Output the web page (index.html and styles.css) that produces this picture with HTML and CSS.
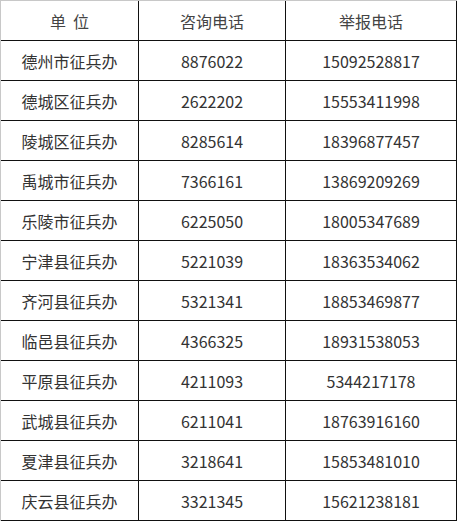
FILE: index.html
```html
<!DOCTYPE html>
<html lang="zh">
<head>
<meta charset="utf-8">
<link rel="stylesheet" href="styles.css">
</head>
<body>
<div class="table">
  <div class="cell head">单&nbsp;&nbsp;位</div><div class="cell head">咨询电话</div><div class="cell head">举报电话</div>
  <div class="cell">德州市征兵办</div><div class="cell">8876022</div><div class="cell">15092528817</div>
  <div class="cell">德城区征兵办</div><div class="cell">2622202</div><div class="cell">15553411998</div>
  <div class="cell">陵城区征兵办</div><div class="cell">8285614</div><div class="cell">18396877457</div>
  <div class="cell">禹城市征兵办</div><div class="cell">7366161</div><div class="cell">13869209269</div>
  <div class="cell">乐陵市征兵办</div><div class="cell">6225050</div><div class="cell">18005347689</div>
  <div class="cell">宁津县征兵办</div><div class="cell">5221039</div><div class="cell">18363534062</div>
  <div class="cell">齐河县征兵办</div><div class="cell">5321341</div><div class="cell">18853469877</div>
  <div class="cell">临邑县征兵办</div><div class="cell">4366325</div><div class="cell">18931538053</div>
  <div class="cell">平原县征兵办</div><div class="cell">4211093</div><div class="cell">5344217178</div>
  <div class="cell">武城县征兵办</div><div class="cell">6211041</div><div class="cell">18763916160</div>
  <div class="cell">夏津县征兵办</div><div class="cell">3218641</div><div class="cell">15853481010</div>
  <div class="cell">庆云县征兵办</div><div class="cell">3321345</div><div class="cell">15621238181</div>
</div>
</body>
</html>
```
FILE: styles.css
```css
html, body {
  margin: 0;
  padding: 0;
  background: #fff;
}
.table {
  display: grid;
  grid-template-columns: 138px 147px 171px;
  grid-auto-rows: 40px;
  width: 456px;
  border-left: 1px solid #c8c8c8;
  border-top: 1px solid #c8c8c8;
  font-family: "Noto Sans CJK SC", "Noto Sans", sans-serif;
  font-size: 16px;
  color: #333;
}
.cell {
  box-sizing: border-box;
  border-right: 1px solid #111;
  border-bottom: 1px solid #111;
  display: flex;
  align-items: center;
  justify-content: center;
  line-height: 1;
  padding-top: 1px;
}
.head {
  color: #444;
}
```
